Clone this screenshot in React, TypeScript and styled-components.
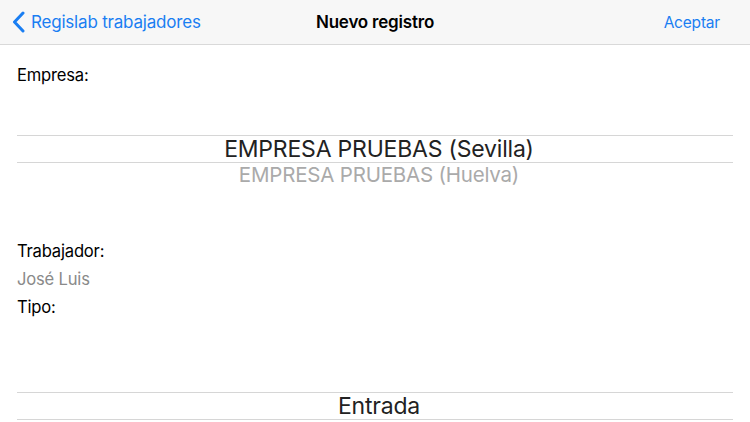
import React from "react";
import styled, { createGlobalStyle } from "styled-components";

const Global = createGlobalStyle`
  html, body { margin: 0; padding: 0; background: #ffffff; }
  body { font-family: Inter, "Noto Sans", "Liberation Sans", sans-serif; -webkit-font-smoothing: antialiased; }
`;

const Page = styled.div`
  width: 750px;
  height: 422px;
  overflow: hidden;
  background: #fff;
`;

const NavBar = styled.div`
  height: 44px;
  background: #f7f7f7;
  border-bottom: 1px solid #d9d9d9;
  display: grid;
  grid-template-columns: 1fr auto 1fr;
  align-items: center;
  padding: 0 30px;
`;

const BackButton = styled.div`
  display: flex;
  align-items: center;
  gap: 6px;
  margin-left: -18px;
  color: #1a7ef2;
  font-size: 17px;
  letter-spacing: -0.2px;
`;

const Title = styled.div`
  font-size: 17px;
  font-weight: 600;
  color: #000;
  letter-spacing: -0.2px;
`;

const Action = styled.div`
  justify-self: end;
  color: #1a7ef2;
  font-size: 15.5px;
  letter-spacing: -0.2px;
`;

const Content = styled.div`
  padding: 16px 17px 0 17px;
`;

const Label = styled.div<{ $muted?: boolean }>`
  font-size: 16.6px;
  line-height: 28px;
  color: ${(p) => (p.$muted ? "#8a8a8a" : "#000")};
  letter-spacing: -0.2px;
`;

const Picker = styled.div<{ $top: number; $bottom: number }>`
  padding-top: ${(p) => p.$top}px;
  padding-bottom: ${(p) => p.$bottom}px;
`;

const Band = styled.div`
  height: 26px;
  border-top: 1px solid #d6d6d6;
  border-bottom: 1px solid #d6d6d6;
  display: flex;
  align-items: center;
  justify-content: center;
  padding-left: 8px;
  font-size: 23px;
  color: #222;
  letter-spacing: -0.2px;
`;

const Option = styled.div`
  height: 22px;
  display: flex;
  align-items: center;
  justify-content: center;
  padding-left: 8px;
  font-size: 20.5px;
  color: #aaaaaa;
  letter-spacing: -0.2px;
`;

export default function App() {
  return (
    <Page>
      <Global />
      <NavBar>
        <BackButton>
          <svg width="13" height="22" viewBox="0 0 13 22">
            <path d="M11 2 L2.5 11 L11 20" fill="none" stroke="#1a7ef2" strokeWidth="3" strokeLinecap="round" strokeLinejoin="round" />
          </svg>
          Regislab trabajadores
        </BackButton>
        <Title>Nuevo registro</Title>
        <Action>Aceptar</Action>
      </NavBar>
      <Content>
        <Label>Empresa:</Label>
        <Picker $top={46} $bottom={52}>
          <Band>EMPRESA PRUEBAS (Sevilla)</Band>
          <Option>EMPRESA PRUEBAS (Huelva)</Option>
        </Picker>
        <Label>Trabajador:</Label>
        <Label $muted>José Luis</Label>
        <Label>Tipo:</Label>
        <Picker $top={71} $bottom={0}>
          <Band>Entrada</Band>
        </Picker>
      </Content>
    </Page>
  );
}
